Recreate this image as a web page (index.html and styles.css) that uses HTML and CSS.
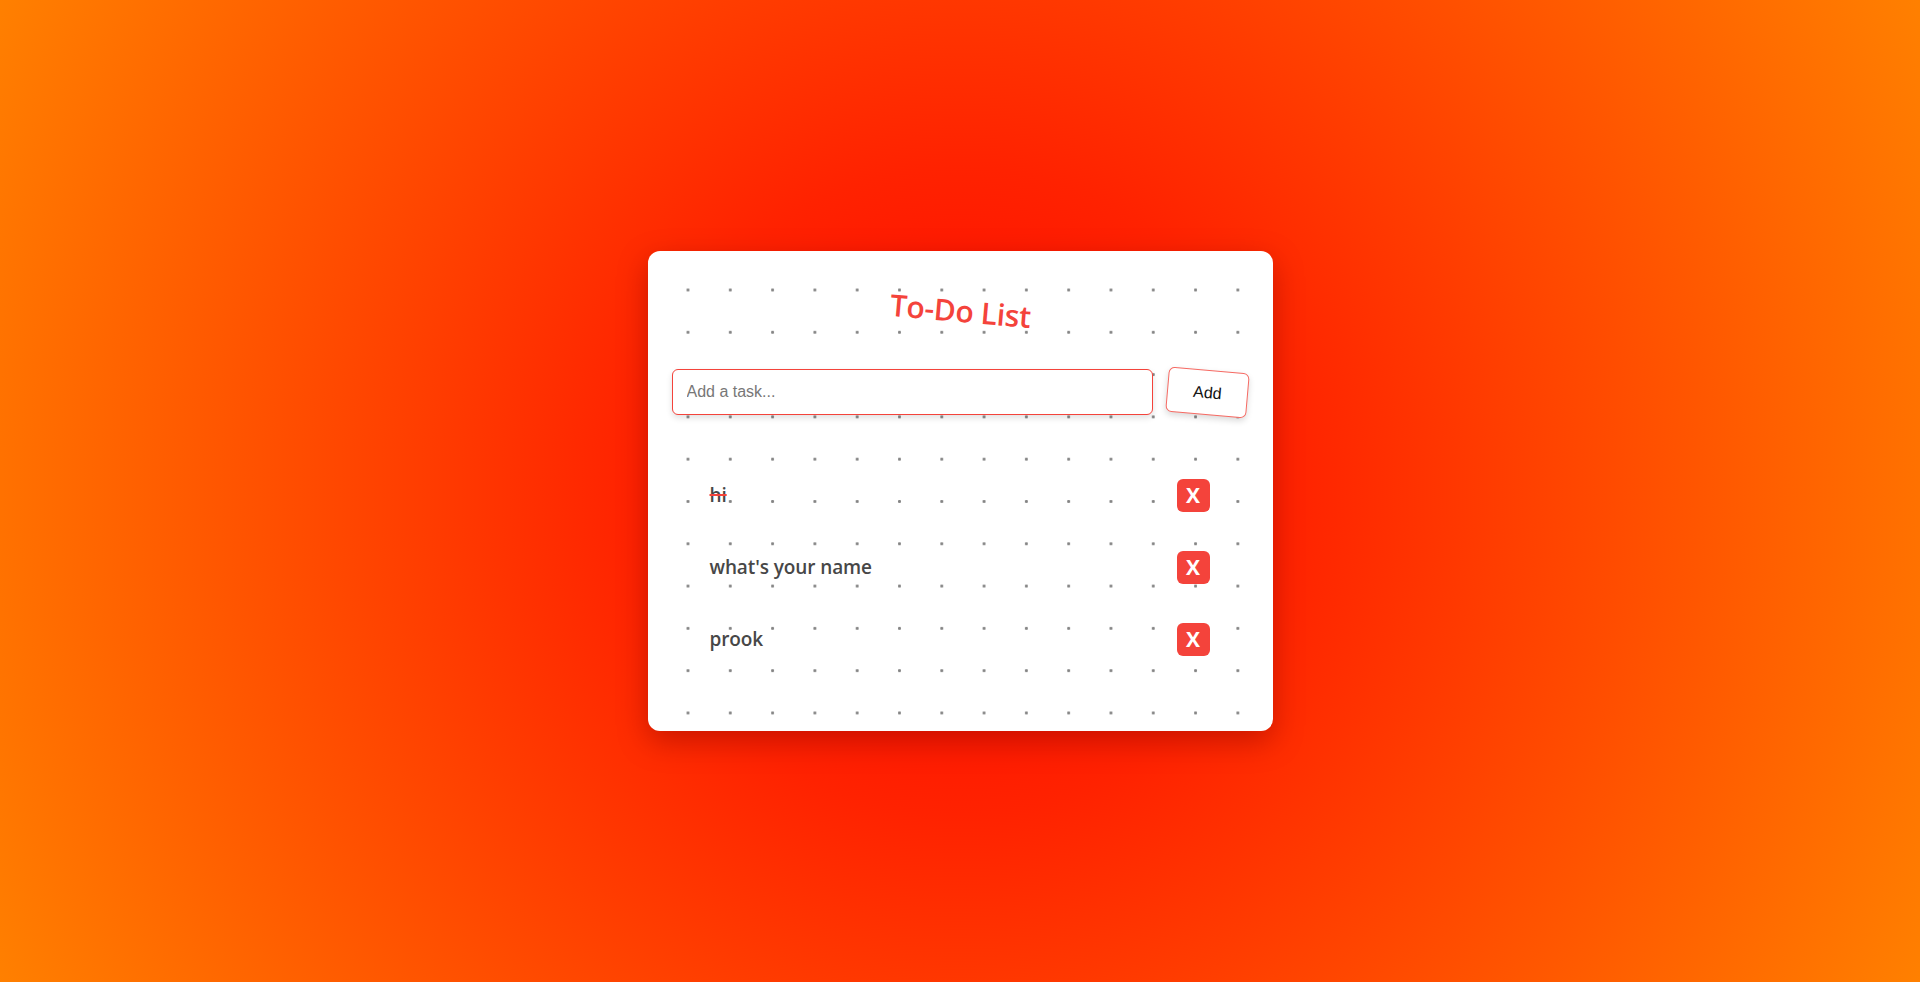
FILE: index.html
```html
<!DOCTYPE html>
<html lang="en">
<head>
<meta charset="utf-8">
<title>To-Do List</title>
<link rel="stylesheet" href="styles.css">
</head>
<body>
  <main class="card">
    <h1 class="title">To-Do List</h1>
    <div class="entry">
      <input class="task-input" type="text" placeholder="Add a task...">
      <button class="add-btn">Add</button>
    </div>
    <ul class="tasks">
      <li class="task"><span class="task-text done">hi</span><button class="del-btn">X</button></li>
      <li class="task"><span class="task-text">what's your name</span><button class="del-btn">X</button></li>
      <li class="task"><span class="task-text">prook</span><button class="del-btn">X</button></li>
    </ul>
  </main>
</body>
</html>
```
FILE: styles.css
```css
* { box-sizing: border-box; }

html, body { height: 100%; }

body {
  margin: 0;
  min-height: 100vh;
  display: flex;
  align-items: center;
  justify-content: center;
  background: radial-gradient(circle at center, #ff0500 0%, #ff2200 30%, #ff8000 100%);
  font-family: "Open Sans", "Liberation Sans", sans-serif;
}

.card {
  width: 625px;
  padding: 24px 24px 56px;
  border-radius: 12px;
  background-color: #ffffff;
  background-image: radial-gradient(circle, #858585 1.2px, rgba(133,133,133,0) 1.9px);
  background-size: 42.3px 42.3px;
  background-position: 18.85px 17.85px;
  box-shadow: 0 10px 30px rgba(120, 0, 0, 0.4);
}

.title {
  margin: 16px 0 0;
  height: 40px;
  line-height: 40px;
  text-align: center;
  font-size: 30px;
  font-weight: 600;
  color: #f4433b;
  transform: rotate(5deg);
  letter-spacing: -0.3px;
}

.entry {
  margin-top: 38px;
  display: flex;
  align-items: center;
  gap: 14px;
}

.task-input {
  flex: 1;
  height: 46px;
  padding: 0 14px;
  border: 1px solid #f4433b;
  border-radius: 6px;
  background: #fff;
  font-family: "Liberation Sans", Arial, sans-serif;
  font-size: 16px;
  color: #333;
  box-shadow: 0 3px 6px rgba(0, 0, 0, 0.12);
  outline: none;
}

.task-input::placeholder { color: #777; }

.add-btn {
  width: 81px;
  height: 45px;
  margin-right: 1px;
  border: 1px solid #f66a63;
  border-radius: 6px;
  background: #fff;
  font-family: "Liberation Sans", Arial, sans-serif;
  font-size: 16px;
  color: #111;
  transform: rotate(5deg);
  box-shadow: 0 3px 6px rgba(0, 0, 0, 0.15);
}

.tasks {
  list-style: none;
  margin: 44px 0 0;
  padding: 0;
}

.task {
  height: 72px;
  padding: 0 39px 0 38px;
  display: flex;
  align-items: center;
  justify-content: space-between;
}

.task-text {
  font-size: 19px;
  font-weight: 600;
  color: #474747;
  letter-spacing: -0.1px;
}

.task-text.done {
  text-decoration: line-through;
  text-decoration-color: #f4433b;
  text-decoration-thickness: 2px;
}

.del-btn {
  width: 33px;
  height: 33px;
  padding: 0;
  border: none;
  border-radius: 6px;
  background: #f4433b;
  color: #fff;
  font-family: "Open Sans", "Liberation Sans", sans-serif;
  font-size: 21px;
  font-weight: 700;
  line-height: 33px;
  text-align: center;
}
```
